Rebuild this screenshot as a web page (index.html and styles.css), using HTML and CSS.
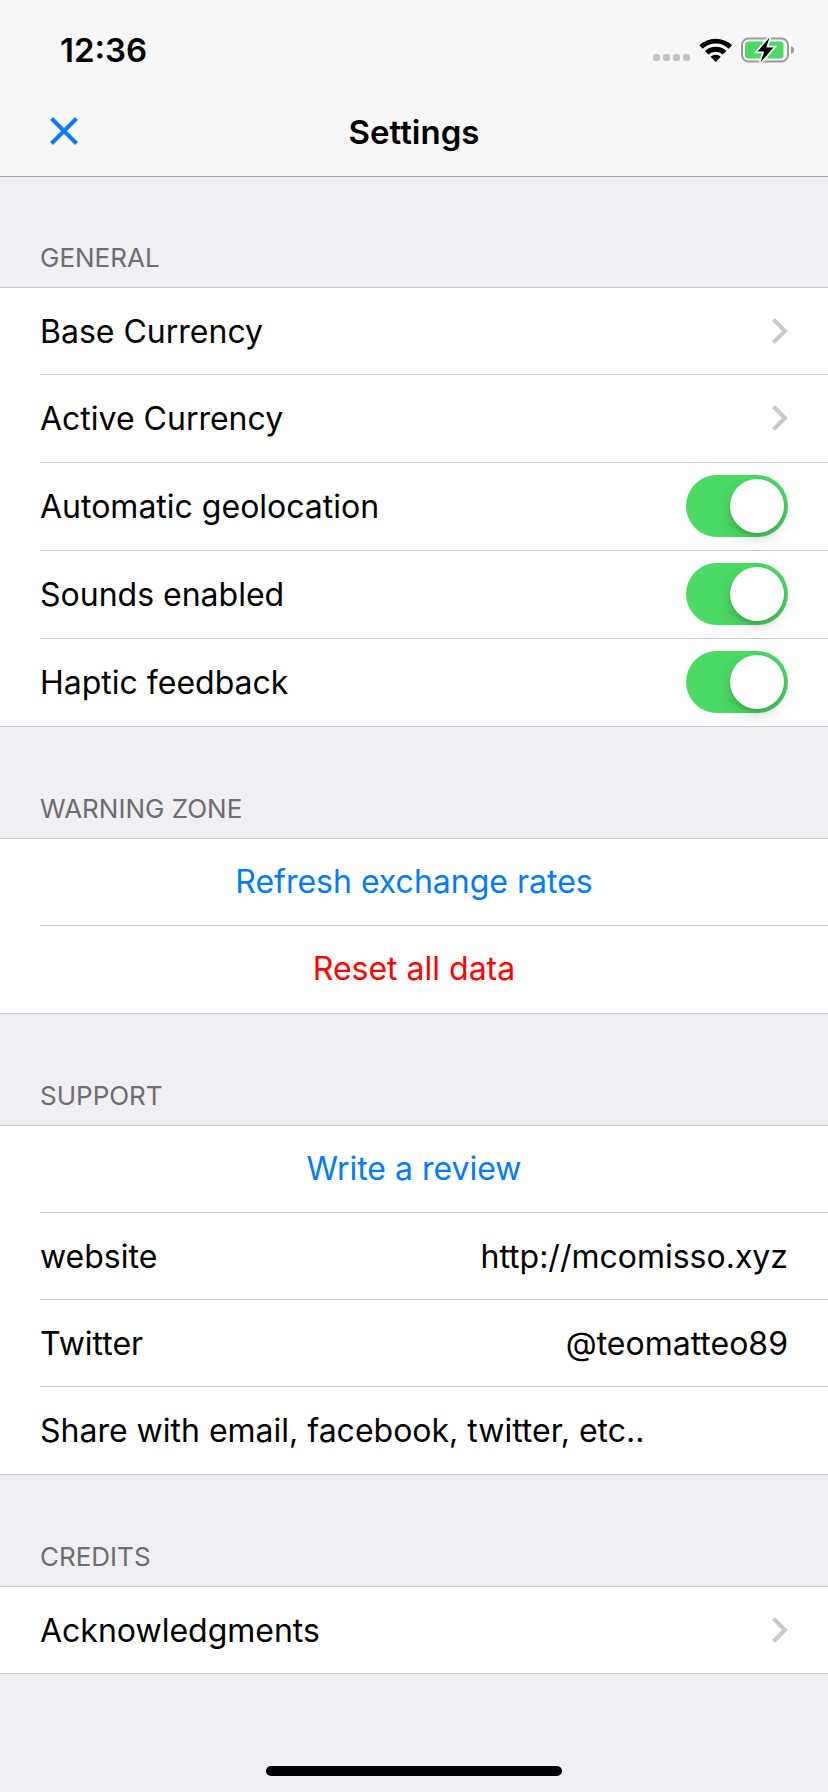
FILE: index.html
```html
<!DOCTYPE html>
<html lang="en">
<head>
<meta charset="utf-8">
<meta name="viewport" content="width=device-width, initial-scale=1">
<title>Settings</title>
<link rel="stylesheet" href="styles.css">
</head>
<body>
<div class="screen">
  <header class="top">
    <div class="status">
      <time class="clock">12:36</time>
      <div class="indicators">
        <svg class="signal" width="38" height="26" viewBox="0 0 38 26" aria-hidden="true">
          <g fill="#c4c4c4"><rect x="0" y="17" width="7" height="7" rx="2.5"/><rect x="10" y="17" width="7" height="7" rx="2.5"/><rect x="20" y="17" width="7" height="7" rx="2.5"/><rect x="30" y="17" width="7" height="7" rx="2.5"/></g>
        </svg>
        <svg class="wifi" width="34" height="26" viewBox="0 0 34 26" aria-hidden="true">
          <path d="M.3 8.2a24 24 0 0 1 32.8 0l-3.4 3.5a19 19 0 0 0-26 0z"/>
          <path d="M6 14a15.700 15.700 0 0 1 21.400 0l-3.500 3.500a10.600 10.600 0 0 0-14.400 0z"/>
          <path d="M11.600 19.800a7.600 7.600 0 0 1 10.200 0l-5.100 5.100z"/>
        </svg>
        <svg class="battery" width="54" height="26" viewBox="0 0 54 26" aria-hidden="true">
          <rect x="1" y="1.500" width="46" height="23" rx="6.500" fill="none" stroke="#9b9b9d" stroke-width="2"/>
          <path d="M50 9c2 .7 3.200 2.200 3.200 4S52 16.300 50 17z" fill="#9b9b9d"/>
          <rect x="4" y="4.500" width="38.500" height="17" rx="3.500" fill="#4cd964"/>
          <path d="M28.500.5 16.500 14.500h6.700L19.500 25.500 32.500 10.500h-7.200z" fill="#000" stroke="#f7f7f7" stroke-width="3.500" paint-order="stroke"/>
        </svg>
      </div>
    </div>
    <nav class="navbar">
      <button class="close" type="button" aria-label="Close">
        <svg width="28" height="28" viewBox="0 0 28 28" aria-hidden="true"><path d="M1.500 1.500l25 25M26.500 1.500l-25 25" stroke="#007aff" stroke-width="4" fill="none"/></svg>
      </button>
      <h1 class="title">Settings</h1>
    </nav>
  </header>

  <main class="content">
    <section>
      <h2 class="heading">General</h2>
      <div class="group">
        <button class="row tight" type="button">Base Currency
          <svg class="chevron" width="16" height="26" viewBox="0 0 16 26" aria-hidden="true"><path d="M1.500 1.500L13 13 1.500 24.500"/></svg>
        </button>
        <button class="row" type="button">Active Currency
          <svg class="chevron" width="16" height="26" viewBox="0 0 16 26" aria-hidden="true"><path d="M1.500 1.500L13 13 1.500 24.500"/></svg>
        </button>
        <label class="row">Automatic geolocation <input class="switch" type="checkbox" checked></label>
        <label class="row">Sounds enabled <input class="switch" type="checkbox" checked></label>
        <label class="row">Haptic feedback <input class="switch" type="checkbox" checked></label>
      </div>
    </section>

    <section>
      <h2 class="heading">Warning zone</h2>
      <div class="group">
        <button class="row tight action" type="button">Refresh exchange rates</button>
        <button class="row action danger" type="button">Reset all data</button>
      </div>
    </section>

    <section>
      <h2 class="heading">Support</h2>
      <div class="group">
        <button class="row tight action" type="button">Write a review</button>
        <a class="row tight" href="http://mcomisso.xyz"><span>website</span><span>http://mcomisso.xyz</span></a>
        <a class="row tight" href="https://twitter.com/teomatteo89"><span>Twitter</span><span>@teomatteo89</span></a>
        <button class="row" type="button">Share with email, facebook, twitter, etc..</button>
      </div>
    </section>

    <section>
      <h2 class="heading">Credits</h2>
      <div class="group">
        <button class="row tight" type="button">Acknowledgments
          <svg class="chevron" width="16" height="26" viewBox="0 0 16 26" aria-hidden="true"><path d="M1.500 1.500L13 13 1.500 24.500"/></svg>
        </button>
      </div>
    </section>
  </main>
  <div class="home"></div>
</div>
</body>
</html>
```

FILE: styles.css
```css
* {
  box-sizing: border-box;
}

body {
  margin: 0;
  background: #efeff4;
  color: #000;
  font-family: Inter, "Liberation Sans", sans-serif;
  font-size: 32px;
  line-height: 40px;
}

.screen {
  display: flex;
  flex-direction: column;
  min-height: 100vh;
}

.top {
  background: #f7f7f7;
  border-bottom: 1px solid #a7a7aa;
}

.status {
  display: flex;
  align-items: center;
  justify-content: space-between;
  height: 88px;
  padding: 12px 33px 0 60px;
}

.clock {
  font-size: 33px;
  font-weight: 600;
}

.indicators {
  display: flex;
  align-items: center;
  gap: 8px;
}

.indicators svg {
  display: block;
}

.navbar {
  display: grid;
  grid-template-columns: 88px 1fr 88px;
  align-items: center;
  height: 88px;
  padding: 0 20px;
}

.close {
  display: flex;
  align-items: center;
  justify-content: center;
  height: 88px;
  padding: 0 0 2px;
  border: 0;
  background: none;
}

.title {
  margin: 0;
  font-size: 33px;
  font-weight: 600;
  text-align: center;
}

.content {
  flex: 1;
}

.heading {
  display: flex;
  align-items: flex-end;
  height: 111px;
  margin: 0;
  padding: 0 40px 14px;
  color: #6d6d72;
  font-size: 26px;
  font-weight: 400;
  line-height: 30px;
  text-transform: uppercase;
}

section:first-child .heading {
  height: 110px;
}

.group {
  padding-left: 40px;
  border-top: 1px solid #c8c7cc;
  border-bottom: 1px solid #c8c7cc;
  background: #fff;
}

.row {
  display: flex;
  align-items: center;
  justify-content: space-between;
  box-sizing: content-box;
  width: calc(100% - 40px);
  min-height: 86px;
  padding: 1px 40px 0 0;
  border: 0;
  border-bottom: 1px solid #c8c7cc;
  background: none;
  color: inherit;
  font: inherit;
  text-align: left;
  text-decoration: none;
}

.row:last-child {
  border-bottom: 0;
}

.tight {
  min-height: 85px;
}

.action {
  justify-content: center;
  padding: 0 40px 1px 0;
  color: #007aff;
}

.danger {
  color: #f00;
}

.chevron {
  margin-bottom: 2px;
  fill: none;
  stroke: #c7c7cc;
  stroke-width: 4;
}

.switch {
  appearance: none;
  width: 102px;
  height: 62px;
  margin: 0 0 2px;
  padding: 4px;
  border-radius: 31px;
  background: #e5e5ea;
}

.switch::before {
  content: "";
  display: block;
  width: 54px;
  height: 54px;
  border-radius: 50%;
  background: #fff;
  box-shadow: 0 6px 14px rgba(0, 0, 0, 0.15), 0 4px 4px rgba(0, 0, 0, 0.1);
}

.switch:checked {
  background: #4cd964;
}

.switch:checked::before {
  margin-left: auto;
}

.home {
  width: 296px;
  height: 10px;
  margin: 24px auto 16px;
  border-radius: 5px;
  background: #000;
}
```
